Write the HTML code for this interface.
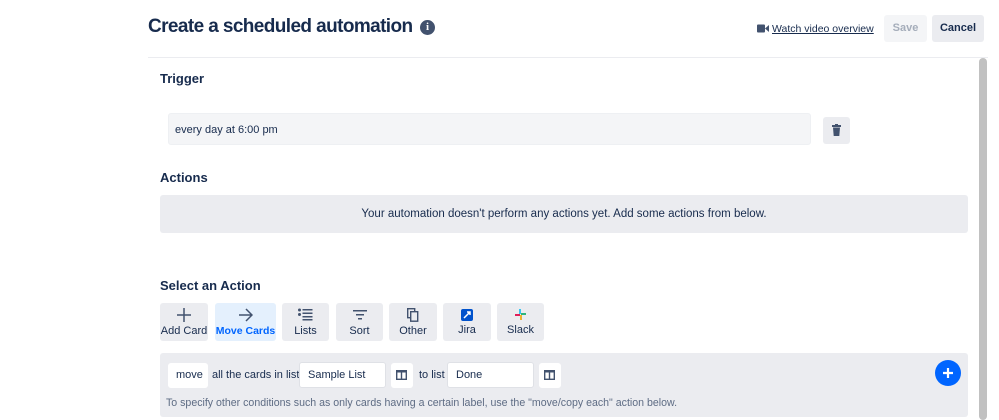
<!DOCTYPE html>
<html><head><style>
*{box-sizing:border-box;margin:0;padding:0}
body{width:999px;height:420px;overflow:hidden;background:#fff;font-family:"Liberation Sans",sans-serif;color:#172b4d;position:relative}
.a{position:absolute}
h1{position:absolute;left:148px;top:16px;font-size:19px;font-weight:bold;color:#172b4d;white-space:nowrap;letter-spacing:-0.6px}
.info{position:absolute;left:420px;top:20px;width:15px;height:15px;border-radius:50%;background:#42526e;color:#fff;font-size:11px;font-weight:bold;text-align:center;line-height:15px;font-family:"Liberation Serif",serif}
.h{font-size:13px;font-weight:bold;color:#172b4d}
.btn{position:absolute;top:303px;height:38px;width:50px;background:#ebecf0;border-radius:3px;font-size:11px;text-align:center;color:#172b4d;white-space:nowrap}
.btn svg{display:block;margin:5px auto 3px}
.box{position:absolute;background:#fff;border-radius:3px;font-size:11px;padding-left:8px;line-height:25px;height:25px}
.ib{position:absolute;background:#fff;border-radius:3px;width:22px;height:25px}
</style></head><body>
<h1>Create a scheduled automation</h1>
<div class="info">i</div>
<svg class="a" style="left:757px;top:24px" width="12" height="9"><rect x="0" y="0.5" width="8" height="8" rx="1" fill="#42526e"/><path d="M8 4.5L12 1V8Z" fill="#42526e"/></svg>
<div class="a" style="left:772px;top:23px;font-size:10.5px;text-decoration:underline;color:#172b4d">Watch video overview</div>
<div class="a" style="left:884px;top:15px;width:43px;height:27px;background:#f4f5f7;border-radius:3px;color:#a5adba;font-size:11px;font-weight:bold;text-align:center;line-height:27px">Save</div>
<div class="a" style="left:932px;top:15px;width:52px;height:27px;background:#ebecf0;border-radius:3px;color:#172b4d;font-size:11px;font-weight:bold;text-align:center;line-height:27px">Cancel</div>
<div class="a" style="left:148px;top:57px;width:840px;height:1px;background:#ebecf0"></div>
<div class="a" style="left:979px;top:58px;width:8px;height:362px;background:#c1c1c1;border-radius:4px"></div>
<div class="a h" style="left:160px;top:71px">Trigger</div>
<div class="a" style="left:168px;top:113px;width:643px;height:32px;background:#f4f5f7;border-radius:3px;font-size:11px;padding-left:6px;line-height:32px;border:1px solid #eef0f3">every day at 6:00 pm</div>
<div class="a" style="left:823px;top:117px;width:27px;height:27px;background:#ebecf0;border-radius:3px"></div>
<svg class="a" style="left:832px;top:124px" width="9" height="12"><rect x="0" y="1" width="9" height="2" fill="#42526e"/><rect x="3" y="0" width="3" height="2" fill="#42526e"/><path d="M1 3.5H8L7.3 12H1.7Z" fill="#42526e"/></svg>
<div class="a h" style="left:160px;top:170px">Actions</div>
<div class="a" style="left:160px;top:195px;width:808px;height:38px;background:#ebecf0;border-radius:3px;font-size:11.5px;text-align:center;line-height:38px">Your automation doesn't perform any actions yet. Add some actions from below.</div>
<div class="a h" style="left:160px;top:278px">Select an Action</div>
<div class="btn" style="left:160px;width:48px"><svg width="14" height="14"><path d="M7 0V14M0 7H14" stroke="#42526e" stroke-width="1.5"/></svg>Add Card</div>
<div class="btn" style="left:215px;width:61px;background:#e4f0fd;color:#0065ff;font-weight:bold;font-size:10.5px"><svg width="14" height="14"><path d="M0 7H13M7 1L13 7L7 13" stroke="#42526e" stroke-width="1.5" fill="none"/></svg>Move Cards</div>
<div class="btn" style="left:282px;width:47px"><svg width="15" height="14"><g fill="#42526e"><circle cx="1.5" cy="2" r="1.5"/><circle cx="1.5" cy="6.5" r="1.5"/><rect x="4.5" y="1" width="10" height="1.5"/><rect x="4.5" y="4.5" width="10" height="1.5"/><rect x="4.5" y="8" width="10" height="1.5"/><rect x="4.5" y="11" width="10" height="1.5"/></g></svg>Lists</div>
<div class="btn" style="left:336px;width:47px"><svg width="14" height="14"><g fill="#42526e"><rect x="0" y="2" width="14" height="1.5"/><rect x="3" y="6" width="8" height="1.5"/><rect x="5" y="10" width="4" height="1.5"/></g></svg>Sort</div>
<div class="btn" style="left:389px;width:48px"><svg width="12" height="14"><rect x="0.7" y="0.7" width="7" height="9" fill="none" stroke="#42526e" stroke-width="1.4"/><rect x="3.7" y="3.7" width="7" height="9.5" fill="#ebecf0" stroke="#42526e" stroke-width="1.4"/></svg>Other</div>
<div class="btn" style="left:443px;width:48px"><svg width="12" height="12" style="margin-top:6px"><rect width="12" height="12" rx="2" fill="#0052cc"/><path d="M3 9L9 3M6 3H9V6" stroke="#fff" stroke-width="1.5" fill="none"/></svg>Jira</div>
<div class="btn" style="left:497px;width:47px"><svg width="11" height="11" style="margin-top:6px;margin-bottom:4px"><rect x="4" y="0" width="2" height="5" fill="#36c5f0"/><rect x="6" y="4" width="5" height="2" fill="#2eb67d"/><rect x="5" y="6" width="2" height="5" fill="#ecb22e"/><rect x="0" y="5" width="5" height="2" fill="#e01e5a"/></svg>Slack</div>
<div class="a" style="left:160px;top:353px;width:808px;height:64px;background:#ebecf0;border-radius:3px"></div>
<div class="box" style="left:168px;top:363px;width:40px;font-size:11px">move</div>
<div class="a" style="left:212px;top:369px;font-size:11px">all the cards in list</div>
<div class="box" style="left:299px;top:362px;width:87px;height:26px;border:1px solid #dfe1e6">Sample List</div>
<div class="ib" style="left:391px;top:363px"></div>
<svg class="a" style="left:396px;top:370px" width="11" height="10"><rect x="0.7" y="0.7" width="9.6" height="8.6" fill="none" stroke="#42526e" stroke-width="1.4"/><rect x="0" y="0" width="11" height="2.5" fill="#42526e"/><path d="M5.5 1V9" stroke="#42526e" stroke-width="1.4"/></svg>
<div class="a" style="left:419px;top:369px;font-size:11px">to list</div>
<div class="box" style="left:447px;top:362px;width:87px;height:26px;border:1px solid #dfe1e6">Done</div>
<div class="ib" style="left:539px;top:363px"></div>
<svg class="a" style="left:544px;top:370px" width="11" height="10"><rect x="0.7" y="0.7" width="9.6" height="8.6" fill="none" stroke="#42526e" stroke-width="1.4"/><rect x="0" y="0" width="11" height="2.5" fill="#42526e"/><path d="M5.5 1V9" stroke="#42526e" stroke-width="1.4"/></svg>
<div class="a" style="left:935px;top:360px;width:26px;height:26px;border-radius:50%;background:#0065ff"></div>
<svg class="a" style="left:942px;top:367px" width="12" height="12"><path d="M6 1V11M1 6H11" stroke="#fff" stroke-width="2.2"/></svg>
<div class="a" style="left:166px;top:397px;font-size:10.6px;color:#5e6c84;white-space:nowrap">To specify other conditions such as only cards having a certain label, use the "move/copy each" action below.</div>
</body></html>
